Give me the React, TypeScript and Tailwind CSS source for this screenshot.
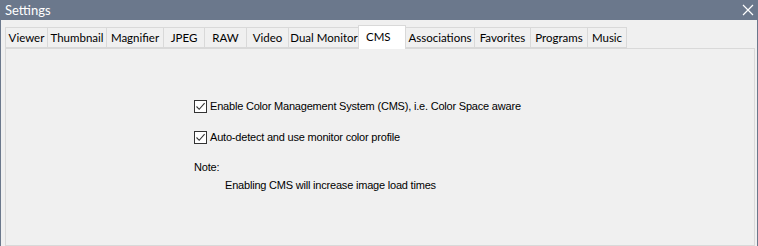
import React from "react";

const tabs = ["Viewer", "Thumbnail", "Magnifier", "JPEG", "RAW", "Video", "Dual Monitor", "CMS", "Associations", "Favorites", "Programs", "Music"];
const widths: Record<string, string> = {
  Viewer: "w-[42px]", Thumbnail: "w-[59px]", Magnifier: "w-[57px]", JPEG: "w-[41px]", RAW: "w-[42px]", Video: "w-[42px]",
  "Dual Monitor": "w-[71px]", CMS: "w-[48px]", Associations: "w-[69px]", Favorites: "w-[56px]", Programs: "w-[57px]", Music: "w-[40px]",
};

function Check({ label }: { label: string }) {
  return (
    <div className="flex items-center gap-[3px] h-[14px]">
      <span className="w-[13px] h-[13px] border border-[#333] bg-white flex items-center justify-center">
        <svg width="11" height="11" viewBox="0 0 11 11"><path d="M1.5 5.5 L4.2 8.3 L9.6 2.2" fill="none" stroke="#333" strokeWidth="1.1" /></svg>
      </span>
      <span>{label}</span>
    </div>
  );
}

export default function App() {
  return (
    <div className="w-[758px] h-[246px] overflow-hidden bg-[#6b788c] flex flex-col font-['Lato',sans-serif] text-black">
      <div className="h-[20px] flex items-center justify-between pl-[5px] pr-[4px] text-white text-[13px]">
        <span className="leading-none">Settings</span>
        <svg width="12" height="12" viewBox="0 0 12 12"><path d="M1 1 L11 11 M11 1 L1 11" stroke="white" strokeWidth="1.2" /></svg>
      </div>
      <div className="flex-1 mx-[1px] bg-[#f0f0f0] pl-[4px] pr-[2px] flex flex-col text-[11.5px] whitespace-nowrap">
        <div className="flex items-end h-[28px]">
          {tabs.map((t) => t === "CMS" ? (
            <div key={t} className={`${widths[t]} h-[24px] -mb-[1px] -mx-[1px] relative z-10 bg-white border border-[#d9d9d9] border-b-0 pl-[7px] pt-[2px]`}>{t}</div>
          ) : (
            <div key={t} className={`${widths[t]} h-[21px] bg-[#f0f0f0] border border-[#d9d9d9] border-r-0 last:border-r flex items-center justify-center`}>{t}</div>
          ))}
        </div>
        <div className="flex-1 border border-[#d9d9d9] bg-[#f0f0f0] pl-[188px] pt-[50px] font-['Liberation_Sans',sans-serif] text-[11px] tracking-[-0.2px]">
          <Check label="Enable Color Management System (CMS), i.e. Color Space aware" />
          <div className="h-[17px]" />
          <Check label="Auto-detect and use monitor color profile" />
          <div className="mt-[15px]">Note:</div>
          <div className="mt-[1px] pl-[31px]">Enabling CMS will increase image load times</div>
        </div>
      </div>
    </div>
  );
}
